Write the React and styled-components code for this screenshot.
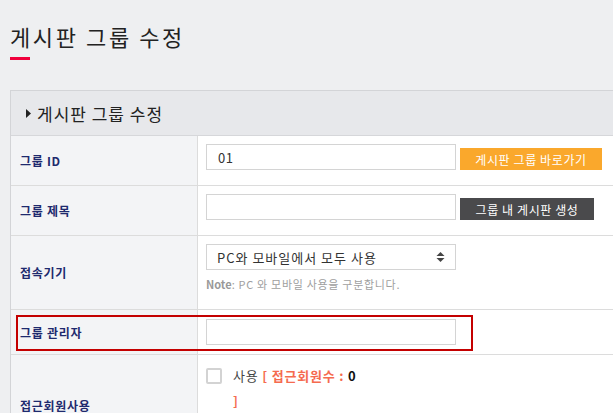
import React from "react";
import styled, { createGlobalStyle } from "styled-components";

const Global = createGlobalStyle`
  html, body { margin: 0; padding: 0; overflow: hidden; }
  body {
    background: #eeeff1;
    font-family: "Noto Sans CJK KR", "Noto Sans", sans-serif;
    color: #333;
  }
`;

const Page = styled.div`
  padding: 0 0 0 10px;
  width: 780px;
`;

const TitleBlock = styled.div`
  padding-top: 20px;
  height: 70px;
  box-sizing: border-box;
`;

const Title = styled.h1`
  margin: 0;
  font-size: 22px;
  font-weight: 400;
  line-height: 32px;
  color: #222;
  letter-spacing: 2.6px;
`;

const TitleBar = styled.div`
  margin-top: 5px;
  width: 20px;
  height: 3px;
  background: #f0003c;
`;

const Panel = styled.div`
  margin-top: 20px;
  border: 1px solid #d3d4d7;
  background: #fff;
`;

const PanelHeader = styled.div`
  height: 44px;
  background: #e7e8eb;
  border-bottom: 1px solid #d6d7da;
  display: flex;
  align-items: center;
  padding-left: 15px;
  gap: 6px;
  font-size: 17px;
  color: #222;
  letter-spacing: 1px;
`;

const Row = styled.div`
  position: relative;
  display: grid;
  grid-template-columns: 187px 1fr;
  border-bottom: 1px solid #dcdcdc;
  min-height: ${(p) => p.$h}px;
`;

const LabelCell = styled.div`
  background: #f3f4f6;
  border-right: 1px solid #dcdcdc;
  display: flex;
  align-items: center;
  padding-left: 9px;
  font-size: 12px;
  font-weight: 700;
  color: #1e2a6e;
  letter-spacing: 0.7px;
`;

const ValueCell = styled.div`
  padding: ${(p) => p.$pad || "8px 8px 0 8px"};
`;

const InputLine = styled.div`
  display: flex;
  align-items: flex-end;
  gap: 4px;
`;

const TextInput = styled.input`
  box-sizing: border-box;
  width: 250px;
  height: 26px;
  border: 1px solid #d4d4d4;
  padding: 0 11px;
  font-family: inherit;
  font-size: 13px;
  color: #333;
  outline: none;
  letter-spacing: 0.5px;
`;

const Button = styled.button`
  height: 22px;
  width: ${(p) => p.$w}px;
  border: none;
  background: ${(p) => p.$bg};
  color: #fff;
  font-family: inherit;
  font-size: 12px;
  padding: 0;
  letter-spacing: 0.6px;
`;

const SelectBox = styled.div`
  box-sizing: border-box;
  width: 250px;
  height: 26px;
  border: 1px solid #d4d4d4;
  display: flex;
  align-items: center;
  justify-content: space-between;
  padding: 0 10px 0 10px;
  font-size: 13px;
  color: #333;
  background: #fff;
  letter-spacing: 1px;
`;

const Note = styled.div`
  margin-top: 6px;
  font-size: 11px;
  color: #a0a0a0;
  letter-spacing: 0.7px;
  b { font-weight: 700; color: #999; letter-spacing: 0; }
`;

const Highlight = styled.div`
  position: absolute;
  left: 5px;
  top: 5px;
  width: 457px;
  height: 36px;
  box-sizing: border-box;
  border: 2px solid #c40000;
  pointer-events: none;
`;

const CheckLine = styled.div`
  display: flex;
  align-items: flex-start;
  gap: 11px;
`;

const Check = styled.span`
  width: 16px;
  height: 16px;
  box-sizing: border-box;
  border: 2px solid #d3d3d3;
  border-radius: 2px;
  background: #fff;
  flex: none;
`;

const CheckText = styled.div`
  font-size: 13px;
  line-height: 25px;
  color: #444;
  margin-top: -5px;
  letter-spacing: 0.8px;
`;

const Accent = styled.span`
  color: #f56b4f;
  font-weight: 700;
`;

const Count = styled.span`
  color: #111;
  font-weight: 700;
`;

function Arrow() {
  return (
    <svg width="9" height="10" viewBox="0 0 9 10">
      <path d="M0.5 4 L4.5 0 L8.5 4 Z" fill="#444" />
      <path d="M0.5 6 L4.5 10 L8.5 6 Z" fill="#444" />
    </svg>
  );
}

function Tri() {
  return (
    <svg width="5" height="9" viewBox="0 0 5 9">
      <path d="M0 0 L5 4.5 L0 9 Z" fill="#222" />
    </svg>
  );
}

export default function App() {
  return (
    <Page>
      <Global />
      <TitleBlock>
        <Title>게시판 그룹 수정</Title>
        <TitleBar />
      </TitleBlock>
      <Panel>
        <PanelHeader>
          <Tri />
          <span>게시판 그룹 수정</span>
        </PanelHeader>
        <Row $h={49}>
          <LabelCell>그룹 ID</LabelCell>
          <ValueCell>
            <InputLine>
              <TextInput defaultValue="01" />
              <Button $bg="#faa82c" $w={142}>게시판 그룹 바로가기</Button>
            </InputLine>
          </ValueCell>
        </Row>
        <Row $h={49}>
          <LabelCell>그룹 제목</LabelCell>
          <ValueCell>
            <InputLine>
              <TextInput />
              <Button $bg="#4a4a4c" $w={134}>그룹 내 게시판 생성</Button>
            </InputLine>
          </ValueCell>
        </Row>
        <Row $h={73}>
          <LabelCell>접속기기</LabelCell>
          <ValueCell>
            <SelectBox>
              <span>PC와 모바일에서 모두 사용</span>
              <Arrow />
            </SelectBox>
            <Note>
              <b>Note</b>: PC 와 모바일 사용을 구분합니다.
            </Note>
          </ValueCell>
        </Row>
        <Row $h={44}>
          <LabelCell>그룹 관리자</LabelCell>
          <ValueCell>
            <TextInput />
          </ValueCell>
          <Highlight />
        </Row>
        <Row $h={100}>
          <LabelCell>접근회원사용</LabelCell>
          <ValueCell $pad="13px 8px 0 8px">
            <CheckLine>
              <Check />
              <CheckText>
                사용 <Accent>[ 접근회원수 : </Accent>
                <Count>0</Count>
                <br />
                <Accent>]</Accent>
              </CheckText>
            </CheckLine>
          </ValueCell>
        </Row>
      </Panel>
    </Page>
  );
}
